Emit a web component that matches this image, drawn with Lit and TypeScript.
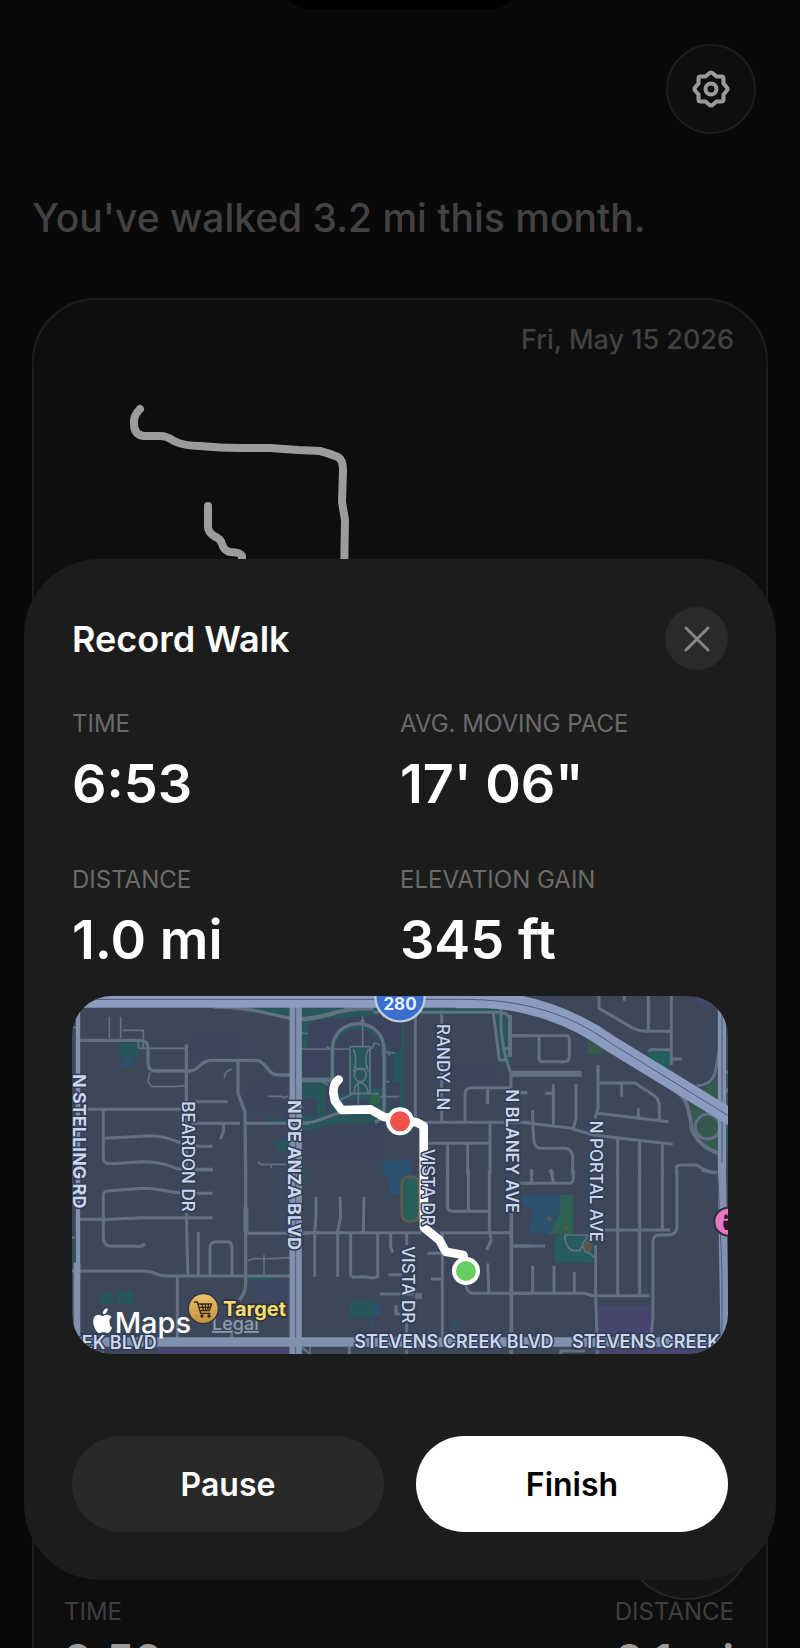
import { LitElement, html, svg, css } from "lit";
import { customElement, property } from "lit/decorators.js";

interface Road {
  w: number;
  d: string;
}

interface Tile {
  x: number;
  y: number;
  areas: { fill: string; d: string }[];
  roads: Road[];
}

interface Label {
  x: number;
  y: number;
  size: number;
  weight: number;
  text: string;
  down?: boolean;
  anchor?: "start" | "end";
}

const TEAL = "#27575a";
const GREEN = "#35594f";
const BLUE = "#2b5270";
const PURPLE = "#47466e";
const LAND = "#3a445d";

const tiles: Tile[] = [
  {
    x: -36,
    y: -33,
    areas: [
      { fill: "#3b465b", d: "M390 125H560V215H440L390 250ZM560 280H690V400H560Z" },
      { fill: TEAL, d: "M450 66H690V106Q600 66 450 66ZM178 172H235V215H178ZM625 402H690V412H625ZM640 475L690 460V500H665Z" },
      { fill: BLUE, d: "M188 218H218V243H188Z" },
    ],
    roads: [
      { w: 5, d: "M148 95V160M182 95V160M188 136H250V188M235 170V190H375M270 262L264 288L274 305H340L375 302M515 252L497 262L492 280M594 530L600 538H680M634 538V548M623 334H665L672 338L685 334M36 127H50" },
      { w: 10, d: "M60 166H245Q264 168 264 190V235Q264 258 285 258H390C420 256 420 226 455 226H590C620 228 620 270 655 270H690M379 178V570M534 228V325L555 380L557 570M460 66C600 66 650 100 722 103" },
      { w: 9, d: "M405 350H503M55 373H365M395 415H540M557 415H750M490 415V440L482 462M130 373V520Q130 536 150 536L250 530C310 530 330 545 365 555M135 460L270 452C310 452 330 462 362 474M400 484H458M400 553H458" },
    ],
  },
  {
    x: 684,
    y: -33,
    areas: [
      { fill: TEAL, d: "M4 66H590L632 100L635 235H600L575 88H360L312 95V372L240 412H120L4 440Z" },
      { fill: LAND, d: "M22 130Q26 112 60 105L280 84H303V200H278V290H300V368H262V200C255 88 95 88 92 195V275H10V190H22ZM106 200C106 110 245 110 245 200V310H212V183H150V322L120 330L106 312ZM76 300H90V380L76 395ZM10 340H50V395H10ZM132 345H205V365H132Z" },
      { fill: TEAL, d: "M155 188H206V323H155Z" },
      { fill: "#2f6546", d: "M208 335L228 326L244 345L228 362L208 350Z" },
      { fill: "#3a455c", d: "M440 230H590V290H440ZM10 440L250 412V527H10Z" },
      { fill: BLUE, d: "M250 527H335V570H250Z" },
    ],
    roads: [
      { w: 13, d: "M0 103C90 100 110 66 220 70" },
      { w: 9, d: "M220 82H600Q630 84 630 110V215M346 85V412M425 88V412M0 415C60 415 80 390 120 385M385 475H570M345 412H690M495 412V330Q495 308 515 308H630M563 310V358M443 475V570M503 475V570M570 415V570M580 85L598 225H620M603 70V130Q610 210 633 265V310M635 152H690M612 190H633M660 323H682" },
      { w: 10, d: "M97 285V195C97 90 252 90 252 195V370C252 400 230 410 225 412M97 285V340" },
      { w: 14, d: "M0 285H97M635 268H690" },
      { w: 5, d: "M0 192H150M188 92V185M150 185H210V325H150ZM160 192Q175 225 160 260M205 192Q190 225 205 260M162 245Q185 262 204 245M163 270A18 20 0 1 0 199 270A18 20 0 1 0 163 270M162 322Q165 295 180 292Q200 296 205 322M175 290V360M120 345L160 326H235M240 335H298M215 192L222 176Q235 172 240 182M252 200L285 204M262 200L270 212M255 290H268M80 185L92 192M65 290L85 300M6 145H24M182 110L188 102L194 110" },
    ],
  },
  {
    x: 1314,
    y: -33,
    areas: [
      { fill: GREEN, d: "M232 165H262L300 190L270 208H232ZM540 345L580 310L655 255V340L660 500H615Q565 470 548 415Z" },
      { fill: "#22605f", d: "M415 205L482 198V245H450L415 222ZM645 430H656V480H645Z" },
      { fill: PURPLE, d: "M560 33H625V62H585Q565 62 560 40Z" },
    ],
    roads: [
      { w: 9, d: "M5 152H165Q178 150 178 165V215Q178 230 160 230H95Q87 230 87 220V155M267 32V70L370 130Q390 139 410 139H482M343 32V47M415 32V139M484 32V240M484 222H515M415 198L425 194H482M264 240V370L255 400M265 294H375L430 330Q448 342 448 365V408M335 294V335M263 385L475 410M385 370V395M130 298V420M105 325H130M198 298V400L190 430M68 375V415L72 470Q75 490 95 490H165Q188 492 188 520V570M30 323H50M30 412L175 428L250 450L488 478M323 460V570M389 468V570M457 475V570M500 570V545Q502 540 515 540H560Q590 562 620 562M65 570V552M130 570L122 552" },
      { w: 18, d: "M5 266H215" },
      { w: 12, d: "M0 90V215M430 275Q500 310 525 345Q540 380 545 430Q560 480 625 505" },
      { w: 9, d: "M560 302Q612 300 618 250L632 170M556 425A37 37 0 1 0 630 425A37 37 0 1 0 556 425M640 262H656M640 330L656 310" },
    ],
  },
  {
    x: -36,
    y: 522,
    areas: [
      { fill: TEAL, d: "M120 370H158V402H120ZM172 362H220V402H172ZM565 320H645V330H565ZM36 210H44V280H36Z" },
      { fill: PURPLE, d: "M290 530H690V555H290Z" },
      { fill: "#3b4660", d: "M570 330H690V390H600Z" },
    ],
    roads: [
      { w: 9, d: "M50 148H150L250 143H458M130 215V75Q130 62 150 62L250 55C310 55 320 68 360 68M400 70H458M400 0H458M130 205Q130 229 155 229H240Q252 229 252 220M36 303H250C290 303 285 318 315 318H690M380 130V180L384 318M415 185V318M450 318V235Q450 215 468 215H500Q516 215 516 235V318M562 190H750M352 318V505M515 480V505" },
      { w: 10, d: "M557 0V340Q557 370 538 390" },
      { w: 15, d: "M558 112V185" },
      { w: 5, d: "M562 272L580 266H640L690 263M612 255V318M36 203H45M725 530L750 552M130 530V552" },
    ],
  },
  {
    x: 684,
    y: 522,
    areas: [
      { fill: BLUE, d: "M262 10H312V72H268ZM222 402H242V436H222ZM208 450H222V468H208ZM458 460H470V474H458ZM670 75H692V100H670Z" },
      { fill: TEAL, d: "M150 395H222V443H150ZM305 120H360V158H318ZM4 0H14V50H4Z" },
    ],
    roads: [
      { w: 9, d: "M10 188H365M420 188H635M48 80V140L44 185V320M120 80L122 140L113 185V320M192 80L190 185M152 190V315L160 322L190 320L220 324L233 320V190M272 190V230L278 248M320 190V225M320 460V552M265 314H305M240 372H340M288 405V432H302M427 190V500M382 250H427M393 327H427M443 0V110Q443 124 460 124H570M505 0V124M568 0V185L574 210L560 240M498 345Q500 370 520 370H690M563 280L567 370M640 228H690M640 40H690M148 530V552" },
      { w: 17, d: "M345 378H366" },
      { w: 11, d: "M634 130V552" },
      { w: 5, d: "M0 530L30 552M30 530V552" },
    ],
  },
  {
    x: 1314,
    y: 522,
    areas: [
      { fill: BLUE, d: "M40 75H150V120L115 190H55L70 130L40 100Z" },
      { fill: "#2c6153", d: "M150 75H190V192H115L150 130Z" },
      { fill: "#265c5d", d: "M135 195H250V278H135Z" },
      { fill: "#5a5844", d: "M220 225L235 208L246 225L242 248H228ZM110 140L122 138L126 150L114 154ZM160 166L172 164L176 178L164 180Z" },
      { fill: PURPLE, d: "M265 407H425L422 490H262ZM265 530H600L585 552H265Z" },
    ],
    roads: [
      { w: 9, d: "M0 40H178Q190 40 190 25V0M65 0V38M120 0Q130 20 130 38M323 0V375M389 0V375M457 0V178M285 180H480M501 0V165Q501 195 475 195H445Q429 197 429 215V440L423 500M10 228H105M10 370H215C235 370 235 377 255 377H418M68 288V370M132 288V370M193 305V370M257 225V375L262 552M152 552V543H225M575 0Q600 8 620 8" },
      { w: 5, d: "M240 195H165Q165 235 190 242H210L222 215L238 195M218 228L226 246L240 250L252 262" },
    ],
  },
];

const streetLabels: Label[] = [
  { x: 3, y: 234, size: 54, weight: 700, text: "N STELLING RD", down: true },
  { x: 329, y: 316, size: 51, weight: 500, text: "BEARDON DR", down: true },
  { x: 649, y: 312, size: 54, weight: 700, text: "N DE ANZA BLVD", down: true },
  { x: 1095, y: 84, size: 51, weight: 500, text: "RANDY LN", down: true },
  { x: 1302, y: 280, size: 51, weight: 600, text: "N BLANEY AVE", down: true },
];

const overlayLabels: Label[] = [
  { x: 1051, y: 458, size: 51, weight: 500, text: "VISTA DR", down: true },
  { x: 990, y: 750, size: 51, weight: 500, text: "VISTA DR", down: true },
  { x: 1555, y: 374, size: 51, weight: 500, text: "N PORTAL AVE", down: true },
  { x: 254, y: 1059, size: 54, weight: 600, text: "EK BLVD", anchor: "end" },
  { x: 847, y: 1057, size: 54, weight: 600, text: "STEVENS CREEK BLVD" },
  { x: 1500, y: 1057, size: 54, weight: 600, text: "STEVENS CREEK" },
];

@customElement("walk-map")
export class WalkMap extends LitElement {
  static styles = css`
    :host {
      display: block;
      border-radius: 40px;
      overflow: hidden;
      background: #3c4759;
    }
    .map {
      display: block;
      width: 100%;
      height: auto;
      font-family: Inter, "Liberation Sans", sans-serif;
    }
    .road {
      fill: none;
      stroke: #637084;
      stroke-linejoin: round;
    }
    .major {
      fill: none;
      stroke: #8090ad;
    }
    .highway {
      fill: none;
      stroke: #8c9bbf;
    }
    .divider {
      fill: none;
      stroke: #4c5b78;
      stroke-width: 3;
    }
    .label {
      fill: #cbd6ec;
      stroke: #303c55;
      stroke-width: 9;
      stroke-linejoin: round;
      paint-order: stroke;
    }
    .route {
      fill: none;
      stroke: #fff;
      stroke-width: 26;
      stroke-linecap: round;
      stroke-linejoin: round;
    }
    .dot {
      stroke: #fff;
      stroke-width: 12;
    }
    .brand {
      fill: #fff;
      font-size: 87px;
      font-weight: 500;
    }
    .place {
      fill: #f6de6c;
      stroke: #2b3038;
      stroke-width: 9;
      stroke-linejoin: round;
      paint-order: stroke;
      font-size: 60px;
      font-weight: 700;
    }
    .legal {
      fill: #8f9aae;
      font-size: 54px;
      font-weight: 500;
      text-decoration: underline;
    }
    .shield {
      fill: #e8eefc;
      font-size: 51px;
      font-weight: 700;
      text-anchor: middle;
    }
  `;

  private renderLabel(l: Label) {
    const turn = l.down ? `rotate(90 ${l.x} ${l.y})` : "";
    return svg`<text class="label" x=${l.x} y=${l.y} transform=${turn}
      text-anchor=${l.anchor ?? "start"}
      font-size=${l.size} font-weight=${l.weight}>${l.text}</text>`;
  }

  render() {
    return html`
      <svg class="map" viewBox="0 0 1968 1074" role="group" aria-label="Map of the walk">
        <defs>
          <linearGradient id="gold" x1="0" y1="0" x2="0" y2="1">
            <stop offset="0" stop-color="#e9c46b"></stop>
            <stop offset="1" stop-color="#c0903f"></stop>
          </linearGradient>
        </defs>

        ${tiles.map(
          (t) => svg`<g transform="translate(${t.x} ${t.y})">
            ${t.areas.map((a) => svg`<path d=${a.d} fill=${a.fill}></path>`)}
          </g>`
        )}
        ${tiles.map(
          (t) => svg`<g transform="translate(${t.x} ${t.y})">
            ${t.roads.map((r) => svg`<path class="road" d=${r.d} stroke-width=${r.w}></path>`)}
          </g>`
        )}

        <rect x="989" y="542" width="52" height="134" rx="22" fill="#27605a" stroke="#5e5a4f" stroke-width="8"></rect>

        <path class="major" stroke-width="13" d="M18 33V810"></path>
        <path class="major" stroke-width="20" d="M15 800V1020"></path>
        <path class="major" stroke-width="37" d="M671 33V1074"></path>
        <path class="divider" d="M671 33V1074"></path>
        <path class="major" stroke-width="28" d="M20 1038H1968"></path>
        <path class="major" stroke-width="25" d="M1950 27V540L1958 1040"></path>
        <path class="divider" d="M1938 540L1950 830V1010M1950 27V500"></path>
        <path class="highway" stroke-width="36" d="M0 17H1280C1290 17 1310 20 1334 27"></path>
        <path class="highway" stroke-width="50" d="M1150 12H1240C1360 14 1500 60 1614 142L1980 366"></path>
        <path class="divider" d="M0 10H1160C1360 8 1500 58 1614 140L1980 366"></path>

        ${streetLabels.map((l) => this.renderLabel(l))}

        <path
          class="route"
          d="M800 251Q784 262 784 290L789 315L809 342L895 340L934 362L984 373L1034 379L1055 390L1056 695L1102 732L1121 767L1174 777L1182 825"
        ></path>
        <circle class="dot" cx="984" cy="376" r="36" fill="#ee524d"></circle>
        <circle class="dot" cx="1182" cy="825" r="36" fill="#65cf63"></circle>

        ${overlayLabels.map((l) => this.renderLabel(l))}

        <circle cx="984" cy="2" r="74" fill="#3a6fcf" stroke="#c3cbd9" stroke-width="7"></circle>
        <text class="shield" x="984" y="41">280</text>

        <circle cx="1969" cy="677" r="42" fill="#ea78c0" stroke="#2c2f3f" stroke-width="6"></circle>
        <path fill="#2c1a2c" d="M1958 656Q1964 652 1968 660V668H1956ZM1955 674H1968V702H1960Q1951 690 1955 674Z"></path>

        <path
          transform="translate(67 957) scale(0.88)"
          fill="#fff"
          d="M52 26C50 14 58 8 59 7C54 0 46 -1 43 -1C36 -1 31 3 27 3C23 3 18 -1 12 -1C6 0 1 4 -2 10C-8 24 1 48 10 58C14 63 20 62 24 60C28 58 34 58 38 60C44 63 49 61 53 57C58 50 60 45 61 43C60 43 52 38 52 26ZM41 -8C44 -12 46 -18 45 -23C36 -22 29 -14 29 -4C33 -3 38 -5 41 -8Z"
        ></path>
        <text class="brand" x="128" y="1010">Maps</text>
        <a href="#legal"><text class="legal" x="420" y="1002">Legal</text></a>

        <circle cx="394" cy="938" r="45" fill="url(#gold)" stroke="#2f3442" stroke-width="4"></circle>
        <g fill="none" stroke="#33270f" stroke-width="4" stroke-linejoin="round" stroke-linecap="round">
          <path d="M367 918H376L386 952H414M378 924H419L412 944H384M382 934H416M390 924L394 944M400 924L401 944M410 924L407 944"></path>
        </g>
        <circle cx="390" cy="960" r="5" fill="#33270f"></circle>
        <circle cx="411" cy="960" r="5" fill="#33270f"></circle>
        <text class="place" x="453" y="959">Target</text>
      </svg>
    `;
  }
}

@customElement("walk-stat")
export class WalkStat extends LitElement {
  @property() label = "";
  @property() value = "";

  static styles = css`
    :host {
      display: flex;
      flex-direction: column;
      gap: 14px;
    }
    .label {
      font-size: 24px;
      line-height: 28px;
      color: #6b6b6b;
    }
    .value {
      font-size: 54px;
      line-height: 64px;
      font-weight: 600;
      color: #fff;
    }
  `;

  render() {
    return html`
      <span class="label">${this.label}</span>
      <span class="value">${this.value}</span>
    `;
  }
}

@customElement("app-root")
export class AppRoot extends LitElement {
  static styles = css`
    :host {
      display: block;
      position: relative;
      height: 100vh;
      overflow: hidden;
      background: #090909;
      font-family: Inter, "Liberation Sans", sans-serif;
    }
    .notch {
      position: absolute;
      top: -60px;
      left: 50%;
      width: 244px;
      height: 70px;
      margin-left: -122px;
      border-radius: 35px;
      background: #000;
    }
    .home {
      padding: 0 32px;
    }
    .bar {
      display: flex;
      justify-content: flex-end;
      padding: 44px 12px 0 0;
    }
    .settings {
      display: grid;
      place-items: center;
      box-sizing: border-box;
      width: 90px;
      height: 90px;
      padding: 0;
      border: 2px solid #1c1c1c;
      border-radius: 50%;
      background: #0e0e0e;
    }
    .gear {
      width: 40px;
      height: 40px;
    }
    .summary {
      margin: 60px 0 56px;
      font-size: 39px;
      line-height: 48px;
      font-weight: 500;
      color: #424242;
    }
    .card {
      border: 2px solid #1d1d1d;
      border-radius: 64px;
      background: #0e0e0e;
    }
    .date {
      padding: 24px 32px 0;
      font-size: 27px;
      line-height: 32px;
      font-weight: 500;
      text-align: right;
      color: #424242;
    }
    .trace {
      display: block;
      width: 100%;
      height: auto;
    }
    .totals {
      display: flex;
      justify-content: space-between;
      padding: 0 32px 32px 30px;
    }
    .total {
      display: flex;
      flex-direction: column;
      gap: 8px;
    }
    .total.end {
      text-align: right;
    }
    .total-label {
      font-size: 24px;
      line-height: 28px;
      color: #3f3f3f;
    }
    .total-value {
      font-size: 44px;
      line-height: 52px;
      font-weight: 600;
      color: #9a9a9a;
    }
    .add {
      position: absolute;
      right: 48px;
      bottom: 48px;
      box-sizing: border-box;
      width: 130px;
      height: 130px;
      border: 2px solid #262626;
      border-radius: 50%;
      background: #151515;
    }
    .sheet {
      position: absolute;
      left: 24px;
      right: 24px;
      bottom: 68px;
      box-sizing: border-box;
      padding: 48px;
      border-radius: 76px;
      background: #1c1c1c;
    }
    .head {
      display: flex;
      align-items: center;
      justify-content: space-between;
      margin-bottom: 40px;
    }
    .title {
      margin: 0;
      font-size: 36px;
      line-height: 44px;
      font-weight: 600;
      color: #fff;
    }
    .close {
      display: grid;
      place-items: center;
      width: 63px;
      height: 63px;
      padding: 0;
      border: 0;
      border-radius: 50%;
      background: #2a2a2a;
    }
    .cross {
      width: 28px;
      height: 28px;
    }
    .stats {
      display: grid;
      grid-template-columns: 1fr 1fr;
      row-gap: 50px;
      margin-bottom: 24px;
    }
    .actions {
      display: grid;
      grid-template-columns: 1fr 1fr;
      gap: 32px;
      margin-top: 82px;
    }
    .action {
      height: 96px;
      padding: 0;
      border: 0;
      border-radius: 48px;
      font-family: inherit;
      font-size: 32px;
      font-weight: 600;
      background: #292929;
      color: #fff;
    }
    .action.primary {
      background: #fff;
      color: #000;
    }
  `;

  render() {
    return html`
      <div class="notch"></div>

      <main class="home">
        <div class="bar">
          <button class="settings" aria-label="Settings">
            <svg class="gear" viewBox="-20 -20 40 40" fill="none" stroke="#9b9b9b" stroke-width="4" stroke-linejoin="round">
              <path
                d="M-2 -15.5Q0 -17.5 2 -15.5L5.500 -12.500H10.500Q12.500 -12.500 12.500 -10.500V-5.500L15.500 -2Q17.500 0 15.500 2L12.500 5.500V10.500Q12.500 12.500 10.500 12.500H5.500L2 15.500Q0 17.500 -2 15.500L-5.500 12.500H-10.500Q-12.500 12.500 -12.500 10.500V5.500L-15.500 2Q-17.500 0 -15.500 -2L-12.500 -5.500V-10.500Q-12.500 -12.500 -10.500 -12.500H-5.500Z"
              ></path>
              <circle r="5.5"></circle>
            </svg>
          </button>
        </div>
        <h1 class="summary">You've walked 3.2 mi this month.</h1>

        <article class="card">
          <div class="date">Fri, May 15 2026</div>
          <svg
            class="trace"
            viewBox="34 356 732 1242"
            fill="none"
            stroke="#9c9c9c"
            stroke-width="8"
            stroke-linecap="round"
            stroke-linejoin="round"
            aria-hidden="true"
          >
            <path
              d="M140 409Q133 416 134 424Q134 435 144 436H160Q167 436 174 441Q184 446 200 446Q220 448 240 448H270Q284 449 298 450L320 451Q328 453 338 457Q343 460 343 470L342 502L345 520L344 580"
            ></path>
            <path d="M208 506V527Q208 532 214 536Q221 539 222 544Q224 551 230 552Q240 552 242 556V570"></path>
          </svg>
          <div class="totals">
            <div class="total">
              <span class="total-label">TIME</span>
              <span class="total-value">9:50</span>
            </div>
            <div class="total end">
              <span class="total-label">DISTANCE</span>
              <span class="total-value">2.1 mi</span>
            </div>
          </div>
        </article>
      </main>

      <button class="add" aria-label="Start a walk"></button>

      <section class="sheet" role="dialog" aria-labelledby="sheet-title">
        <header class="head">
          <h2 class="title" id="sheet-title">Record Walk</h2>
          <button class="close" aria-label="Close">
            <svg class="cross" viewBox="0 0 28 28" stroke="#868686" stroke-width="3" stroke-linecap="round">
              <path d="M3 3L25 25M25 3L3 25"></path>
            </svg>
          </button>
        </header>
        <div class="stats">
          <walk-stat label="TIME" value="6:53"></walk-stat>
          <walk-stat label="AVG. MOVING PACE" value="17' 06&quot;"></walk-stat>
          <walk-stat label="DISTANCE" value="1.0 mi"></walk-stat>
          <walk-stat label="ELEVATION GAIN" value="345 ft"></walk-stat>
        </div>
        <walk-map></walk-map>
        <div class="actions">
          <button class="action">Pause</button>
          <button class="action primary">Finish</button>
        </div>
      </section>
    `;
  }
}
